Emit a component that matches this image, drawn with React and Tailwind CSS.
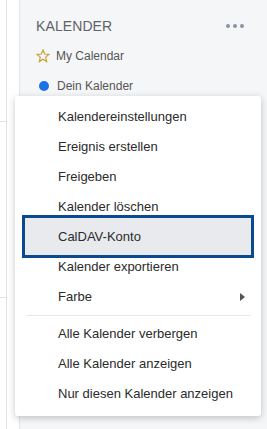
import React from "react";

const FONT = { fontFamily: '"Liberation Sans", Arial, sans-serif' };

const topItems = [
  "Kalendereinstellungen",
  "Ereignis erstellen",
  "Freigeben",
  "Kalender löschen",
];

const bottomItems = [
  "Alle Kalender verbergen",
  "Alle Kalender anzeigen",
  "Nur diesen Kalender anzeigen",
];

const StarOutline = () => (
  <svg width="14" height="14" viewBox="0 0 14 14" className="shrink-0">
    <polygon
      points="7,1 8.7,5 13,5.3 9.7,8.1 10.7,12.6 7,10.2 3.3,12.6 4.3,8.1 1,5.3 5.3,5"
      fill="none"
      stroke="#c9a237"
      strokeWidth="1.2"
      strokeLinejoin="miter"
    />
  </svg>
);

const MenuItem = ({ label, children }) => (
  <div className="h-[30px] flex items-center pl-[43px] pr-[16px] text-[13px] text-[#2b2b2b]">
    <span className="flex-1">{label}</span>
    {children}
  </div>
);

export default function App() {
  return (
    <div
      className="relative w-[267px] h-[429px] overflow-hidden bg-white flex"
      style={FONT}
    >
      {/* left strip */}
      <div className="w-[19px] shrink-0 flex">
        <div className="w-[7px] h-full border-r border-[#e2e2e2] flex flex-col">
          <div className="h-[122px] border-b border-[#e2e2e2]" />
          <div className="h-[176px] border-b border-[#e2e2e2]" />
        </div>
      </div>

      {/* calendar panel */}
      <div className="flex-1 h-full bg-[#f5f6f8] border-l border-[#e3e4e6] pt-[18px] pl-[16px] pr-[23px]">
        <div className="flex items-center justify-between h-[16px]">
          <span className="text-[14px] leading-[16px] text-[#5f6368] tracking-[0.1px]">
            KALENDER
          </span>
          <div className="flex gap-[3px]">
            <span className="w-[4px] h-[4px] rounded-full bg-[#8a92a3]" />
            <span className="w-[4px] h-[4px] rounded-full bg-[#8a92a3]" />
            <span className="w-[4px] h-[4px] rounded-full bg-[#8a92a3]" />
          </div>
        </div>
        <div className="flex items-center gap-[6px] mt-[14px] h-[16px]">
          <StarOutline />
          <span className="text-[12px] text-[#555]">My Calendar</span>
        </div>
        <div className="flex items-center gap-[8px] mt-[14px] h-[16px] pl-[3px]">
          <span className="w-[10px] h-[10px] rounded-full bg-[#1a73e8] shrink-0" />
          <span className="text-[12px] text-[#555]">Dein Kalender</span>
        </div>
      </div>

      {/* context menu */}
      <div className="absolute left-[15px] top-[96px] w-[246px] bg-white rounded-[3px] shadow-[0_2px_7px_rgba(0,0,0,0.22)] pt-[6px] pb-[7px]">
        {topItems.map((t) => (
          <MenuItem key={t} label={t} />
        ))}
        <div className="relative h-[30px]">
          <div className="absolute left-[7px] right-[7px] top-[-7px] bottom-[-6px] border-[3px] border-[#0b4a8f] bg-[#e8eaed]" />
          <div className="relative h-full flex items-center pl-[43px] text-[13px] text-[#2b2b2b]">
            CalDAV-Konto
          </div>
        </div>
        <MenuItem label="Kalender exportieren" />
        <MenuItem label="Farbe">
          <span className="w-0 h-0 border-y-[4px] border-y-transparent border-l-[5px] border-l-[#555]" />
        </MenuItem>
        <div className="py-[3px] px-[11px]">
          <div className="h-px bg-[#e6e6e6]" />
        </div>
        {bottomItems.map((t) => (
          <MenuItem key={t} label={t} />
        ))}
      </div>
    </div>
  );
}
